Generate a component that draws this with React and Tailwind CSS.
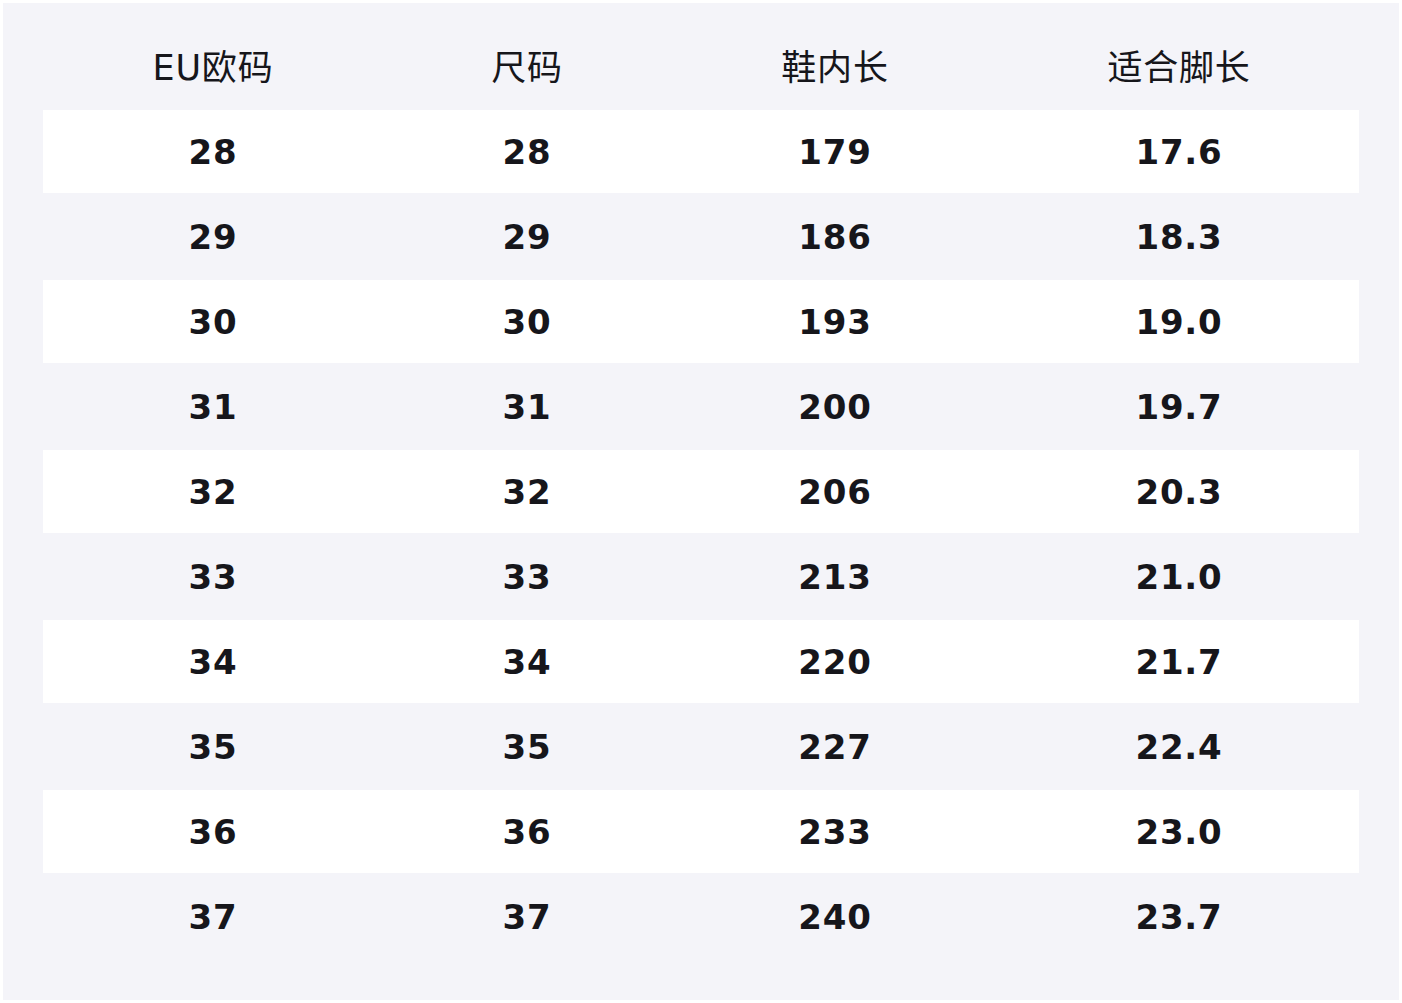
import React from "react";

const rows = [
  ["28", "28", "179", "17.6"],
  ["29", "29", "186", "18.3"],
  ["30", "30", "193", "19.0"],
  ["31", "31", "200", "19.7"],
  ["32", "32", "206", "20.3"],
  ["33", "33", "213", "21.0"],
  ["34", "34", "220", "21.7"],
  ["35", "35", "227", "22.4"],
  ["36", "36", "233", "23.0"],
  ["37", "37", "240", "23.7"],
];

const headers = ["EU欧码", "尺码", "鞋内长", "适合脚长"];

function App() {
  return (
    <div className="w-[1402px] h-[1003px] bg-white pt-[3px] pl-[3px]">
      <div
        className="w-[1396px] h-[997px] bg-[#f4f4f9] pt-[22px] px-[40px] text-[#16161b]"
        style={{ fontFamily: '"DejaVu Sans", "Noto Sans CJK SC", sans-serif' }}
      >
        <div className="grid grid-cols-[340px_288px_328px_360px] h-[85px] pt-[2px] items-center text-center text-[35px] tracking-[0.8px]">
          {headers.map((h) => (
            <div key={h}>{h}</div>
          ))}
        </div>
        {rows.map((r, i) => (
          <div
            key={r[0]}
            className={
              i % 2 === 0
                ? "grid grid-cols-[340px_288px_328px_360px] h-[83px] pt-[2px] items-center text-center bg-white text-[34px] font-bold tracking-[0.8px]"
                : "grid grid-cols-[340px_288px_328px_360px] h-[87px] pt-[2px] items-center text-center text-[34px] font-bold tracking-[0.8px]"
            }
          >
            {r.map((c, j) => (
              <div key={j}>{c}</div>
            ))}
          </div>
        ))}
      </div>
    </div>
  );
}

export default App;
